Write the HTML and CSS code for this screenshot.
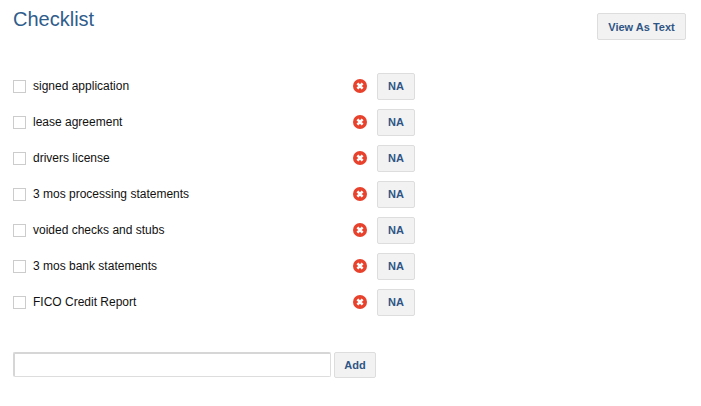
FILE: index.html
```html
<!DOCTYPE html>
<html lang="en">
<head>
    <meta charset="UTF-8">
    <title>Checklist</title>
    <link rel="stylesheet" href="styles.css">
</head>
<body>
<div class="header">
    <h1>Checklist</h1>
    <button class="btn btn-text">View As Text</button>
</div>
<ul class="checklist">
    <li><span class="check"></span><span class="label">signed application</span><svg class="remove" viewBox="0 0 14 14"><circle cx="7" cy="7" r="7" fill="#e8412c"/><path d="M4.4 4.4L9.6 9.6M9.6 4.4L4.4 9.6" stroke="#fff" stroke-width="2.6"/></svg><button class="btn btn-na">NA</button></li>
    <li><span class="check"></span><span class="label">lease agreement</span><svg class="remove" viewBox="0 0 14 14"><circle cx="7" cy="7" r="7" fill="#e8412c"/><path d="M4.4 4.4L9.6 9.6M9.6 4.4L4.4 9.6" stroke="#fff" stroke-width="2.6"/></svg><button class="btn btn-na">NA</button></li>
    <li><span class="check"></span><span class="label">drivers license</span><svg class="remove" viewBox="0 0 14 14"><circle cx="7" cy="7" r="7" fill="#e8412c"/><path d="M4.4 4.4L9.6 9.6M9.6 4.4L4.4 9.6" stroke="#fff" stroke-width="2.6"/></svg><button class="btn btn-na">NA</button></li>
    <li><span class="check"></span><span class="label">3 mos processing statements</span><svg class="remove" viewBox="0 0 14 14"><circle cx="7" cy="7" r="7" fill="#e8412c"/><path d="M4.4 4.4L9.6 9.6M9.6 4.4L4.4 9.6" stroke="#fff" stroke-width="2.6"/></svg><button class="btn btn-na">NA</button></li>
    <li><span class="check"></span><span class="label">voided checks and stubs</span><svg class="remove" viewBox="0 0 14 14"><circle cx="7" cy="7" r="7" fill="#e8412c"/><path d="M4.4 4.4L9.6 9.6M9.6 4.4L4.4 9.6" stroke="#fff" stroke-width="2.6"/></svg><button class="btn btn-na">NA</button></li>
    <li><span class="check"></span><span class="label">3 mos bank statements</span><svg class="remove" viewBox="0 0 14 14"><circle cx="7" cy="7" r="7" fill="#e8412c"/><path d="M4.4 4.4L9.6 9.6M9.6 4.4L4.4 9.6" stroke="#fff" stroke-width="2.6"/></svg><button class="btn btn-na">NA</button></li>
    <li><span class="check"></span><span class="label">FICO Credit Report</span><svg class="remove" viewBox="0 0 14 14"><circle cx="7" cy="7" r="7" fill="#e8412c"/><path d="M4.4 4.4L9.6 9.6M9.6 4.4L4.4 9.6" stroke="#fff" stroke-width="2.6"/></svg><button class="btn btn-na">NA</button></li>
</ul>
<div class="add-row">
    <input class="add-input" type="text">
    <button class="btn btn-add">Add</button>
</div>
</body>
</html>
```

FILE: styles.css
```css
*{
    margin:0;
    padding:0;
    box-sizing:border-box;
}
ul{
    list-style:none;
}
body{
    background:#fff;
    font-family:"Liberation Sans",Arial,sans-serif;
    color:#111;
    padding:0 15px 0 13px;
}
.header{
    display:flex;
    justify-content:space-between;
    align-items:flex-start;
    height:73px;
    padding-top:7px;
}
h1{
    font-size:20px;
    line-height:24px;
    font-weight:normal;
    color:#2f5d8c;
}
.btn{
    display:block;
    background:#f2f2f2;
    border:1px solid #ddd;
    border-radius:2px;
    color:#2f5585;
    font-family:"Liberation Sans",Arial,sans-serif;
    font-size:11px;
    font-weight:bold;
}
.btn-text{
    width:89px;
    height:27px;
    margin-top:6px;
}
.checklist li{
    display:flex;
    align-items:center;
    height:27px;
    margin-bottom:9px;
}
.check{
    width:13px;
    height:13px;
    border:1px solid #ccc;
    background:#fff;
}
.label{
    width:320px;
    margin-left:7px;
    padding-bottom:2px;
    font-size:12px;
}
.remove{
    width:14px;
    height:14px;
    margin-right:10px;
    margin-bottom:1px;
}
.btn-na{
    width:38px;
    height:27px;
    padding-bottom:2px;
}
.add-row{
    display:flex;
    align-items:flex-start;
    margin-top:36px;
}
.add-input{
    width:318px;
    height:25px;
    border:1px solid #ddd;
    border-top:2px solid #d6d6d6;
    border-left:2px solid #d6d6d6;
    border-radius:2px;
    background:#fff;
}
.btn-add{
    width:42px;
    height:26px;
    margin-left:3px;
}
```
